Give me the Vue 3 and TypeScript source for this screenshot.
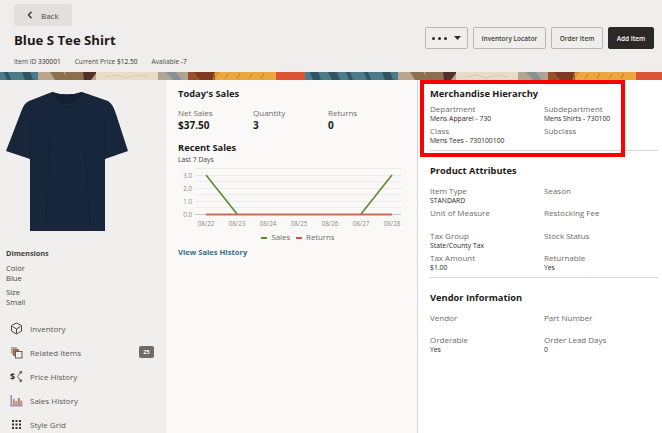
<script setup lang="ts">
const meta = [
  { k: 'Item ID', v: '330001' },
  { k: 'Current Price', v: '$12.50' },
  { k: 'Available', v: '-7' },
]
const nav = [
  { id: 'inv', label: 'Inventory' },
  { id: 'rel', label: 'Related Items', badge: '25' },
  { id: 'price', label: 'Price History' },
  { id: 'sales', label: 'Sales History' },
  { id: 'grid', label: 'Style Grid' },
]
const stats = [
  { k: 'Net Sales', v: '$37.50' },
  { k: 'Quantity', v: '3' },
  { k: 'Returns', v: '0' },
]
const merch = [
  { k: 'Department', v: 'Mens Apparel - 730' },
  { k: 'Subdepartment', v: 'Mens Shirts - 730100' },
  { k: 'Class', v: 'Mens Tees - 730100100' },
  { k: 'Subclass', v: '' },
]
const attrs = [
  { k: 'Item Type', v: 'STANDARD' },
  { k: 'Season', v: '' },
  { k: 'Unit of Measure', v: '' },
  { k: 'Restocking Fee', v: '' },
  { k: 'Tax Group', v: 'State/County Tax' },
  { k: 'Stock Status', v: '' },
  { k: 'Tax Amount', v: '$1.00' },
  { k: 'Returnable', v: 'Yes' },
]
const vendor = [
  { k: 'Vendor', v: '' },
  { k: 'Part Number', v: '' },
  { k: 'Orderable', v: 'Yes' },
  { k: 'Order Lead Days', v: '0' },
]
const yTicks = [
  { l: '3.0', y: 10 },
  { l: '2.0', y: 23 },
  { l: '1.0', y: 36 },
  { l: '0.0', y: 49 },
]
const minor = [3.5, 16.5, 29.5, 42.5]
const days = ['08/22', '08/23', '08/24', '08/25', '08/26', '08/27', '08/28'].map((l, i) => ({ l, x: 36 + i * 31 }))
</script>

<template>
  <div class="app">
    <header class="head">
      <div class="head-left">
        <button class="back">
          <svg width="6" height="8" viewBox="0 0 6 8"><path d="M4.5 .8 1.5 4l3 3.2" fill="none" stroke="#3a3633" stroke-width="1.4" /></svg>
          <span>Back</span>
        </button>
        <h1>Blue S Tee Shirt</h1>
        <div class="meta">
          <span v-for="m in meta" :key="m.k">{{ m.k }} <b>{{ m.v }}</b></span>
        </div>
      </div>
      <div class="actions">
        <button class="btn more">
          <span class="dots"><i></i><i></i><i></i></span>
          <svg width="7" height="4" viewBox="0 0 7 4"><path d="M0 0h7L3.5 4z" fill="#2c2826" /></svg>
        </button>
        <button class="btn w73">Inventory Locator</button>
        <button class="btn w52">Order Item</button>
        <button class="btn primary">Add Item</button>
      </div>
    </header>

    <svg class="stripe" width="662" height="8" aria-hidden="true">
      <defs>
        <pattern id="band" width="360" height="8" patternUnits="userSpaceOnUse">
          <rect width="360" height="8" fill="#d8c6a8" />
          <rect x="0" width="38" height="8" fill="#4b7a88" />
          <path d="M4 0h4l3 8H7zM22 0h8l3 8h-8z" fill="#2f5561" />
          <rect x="38" width="58" height="8" fill="#b8a78c" />
          <path d="M50 0h13l7 8H55zM65 0h18l3 8H68z" fill="#8c6f4e" />
          <path d="M83 0h14l-6 8H84z" fill="#53302a" />
          <rect x="96" width="62" height="8" fill="#e6dcc8" />
          <path d="M105 5l12-2 8 3 14-3 8 2" fill="none" stroke="#d6cab2" />
          <rect x="158" width="30" height="8" fill="#b0a594" />
          <path d="M166 0h10l6 8h-9z" fill="#8a9094" />
          <rect x="188" width="27" height="8" fill="#7e3a20" />
          <path d="M188 0h6l6 8h-12z" fill="#96502a" />
          <rect x="215" width="61" height="8" fill="#eca63e" />
          <path d="M215 0h4l-6 8zM228 2l-3 5M240 1l-3 6M252 2l-3 5M264 1l-3 6" fill="none" stroke="#b97f35" />
          <rect x="276" width="29" height="8" fill="#dc5434" />
          <rect x="305" width="55" height="8" fill="#4b7a88" />
          <path d="M310 0h8l3 8h-8zM328 0h9l3 8h-8zM346 0h4l3 8h-4z" fill="#2f5561" />
        </pattern>
      </defs>
      <rect width="662" height="8" fill="url(#band)" />
    </svg>

    <main class="body">
      <aside class="left">
        <svg class="shirt" width="166" height="153" viewBox="0 80 166 153" aria-label="Blue tee shirt">
          <path d="M52 92Q67 97 82 92L108 101Q113 104 116 114L128 151 105 159V231H30V159L6 151 21 112Q24 103 29 101Z" fill="#18263b" />
          <path d="M52 92Q67 97 82 92L80 99Q67 116 54 99Z" fill="#131f32" />
          <path d="M54 99Q67 112 80 99" fill="none" stroke="#22314a" />
          <path d="M30 120V159M105 120V159M50 140 46 220M85 150 90 225" fill="none" stroke="#152236" stroke-width="1.2" />
        </svg>
        <h3 class="dim-title">Dimensions</h3>
        <dl class="dims">
          <div><dt>Color</dt><dd>Blue</dd></div>
          <div><dt>Size</dt><dd>Small</dd></div>
        </dl>
        <nav class="nav">
          <a v-for="n in nav" :key="n.id" class="nav-row">
            <svg class="ico" width="13" height="13" viewBox="0 0 13 13">
              <g v-if="n.id === 'inv'" fill="none" stroke="#47423e" stroke-width="1">
                <path d="M6.5 1 11.5 3.5v5.5L6.5 12 1.5 9V3.5Z" stroke-linejoin="round" />
                <path d="M2.5 4.5 6.5 7 10.5 4.5M6.5 7v4.5" />
              </g>
              <g v-else-if="n.id === 'rel'">
                <rect x="1" y="1" width="6" height="7" fill="#b3a79c" />
                <rect x="3" y="3" width="6" height="7" fill="#9c6f5a" />
                <rect x="5.5" y="5.5" width="6.5" height="6.5" fill="#f1efee" stroke="#6d5a4e" />
              </g>
              <g v-else-if="n.id === 'price'">
                <text x="0" y="9.5" class="dollar">$</text>
                <path d="M7.5 6.5 10.5 2.5M7.5 6.5l3 4" stroke="#6f6a65" fill="none" />
                <rect x="9.5" y="1" width="2.6" height="2.6" fill="#6f6a65" />
                <rect x="9.5" y="9.5" width="2.6" height="2.6" fill="#6f6a65" />
              </g>
              <g v-else-if="n.id === 'sales'">
                <rect x="0.5" y="1" width="1.4" height="11" fill="#8a86b0" />
                <rect x="2.8" y="5" width="2" height="7" fill="#c08a72" />
                <rect x="5.3" y="7" width="2" height="5" fill="#c08a72" />
                <rect x="7.8" y="4" width="2" height="8" fill="#a77f88" />
                <rect x="10.3" y="6.5" width="2" height="5.5" fill="#c08a72" />
                <rect x="0.5" y="11.4" width="12" height="1" fill="#7f86b0" />
              </g>
              <g v-else fill="#35312e">
                <template v-for="c in [2, 5.5, 9]" :key="c">
                  <rect :x="c" y="2" width="2" height="2" />
                  <rect :x="c" y="5.5" width="2" height="2" />
                  <rect :x="c" y="9" width="2" height="2" />
                </template>
              </g>
            </svg>
            <span class="nav-label">{{ n.label }}</span>
            <span v-if="n.badge" class="badge">{{ n.badge }}</span>
          </a>
        </nav>
      </aside>

      <section class="mid">
        <h2>Today's Sales</h2>
        <div class="stats">
          <div v-for="s in stats" :key="s.k" class="stat">
            <span class="lbl">{{ s.k }}</span>
            <strong>{{ s.v }}</strong>
          </div>
        </div>
        <h2 class="recent">Recent Sales</h2>
        <div class="sub">Last 7 Days</div>
        <svg class="chart" width="236" height="66" viewBox="0 0 236 66">
          <line v-for="m in minor" :key="m" x1="25" x2="231" :y1="m" :y2="m" stroke="#ecebe9" />
          <line v-for="t in yTicks.slice(0, 3)" :key="t.l" x1="25" x2="231" :y1="t.y + 0.5" :y2="t.y + 0.5" stroke="#ecebe9" />
          <line x1="25" x2="231" y1="49.5" y2="49.5" stroke="#c9c7c4" />
          <text v-for="t in yTicks" :key="t.l" x="22" :y="t.y + 2.5" text-anchor="end" class="tick">{{ t.l }}</text>
          <text v-for="d in days" :key="d.l" :x="d.x" y="61" text-anchor="middle" class="tick">{{ d.l }}</text>
          <path d="M36 49.5H222" stroke="#c5594a" stroke-width="1.8" stroke-opacity=".85" fill="none" />
          <path d="M36 10 67 49M191 49 222 10" stroke="#5a8a32" stroke-width="1.6" fill="none" />
        </svg>
        <div class="legend">
          <span><i class="sw green"></i>Sales</span>
          <span><i class="sw red"></i>Returns</span>
        </div>
        <a class="link">View Sales History</a>
      </section>

      <section class="right">
        <div class="block first">
          <h2>Merchandise Hierarchy</h2>
          <div class="fields">
            <div v-for="f in merch" :key="f.k" class="field"><span class="lbl">{{ f.k }}</span><span class="val">{{ f.v }}</span></div>
          </div>
        </div>
        <div class="block">
          <h2>Product Attributes</h2>
          <div class="fields">
            <div v-for="f in attrs" :key="f.k" class="field"><span class="lbl">{{ f.k }}</span><span class="val">{{ f.v }}</span></div>
          </div>
        </div>
        <div class="block last">
          <h2>Vendor Information</h2>
          <div class="fields">
            <div v-for="f in vendor" :key="f.k" class="field"><span class="lbl">{{ f.k }}</span><span class="val">{{ f.v }}</span></div>
          </div>
        </div>
        <div class="highlight"></div>
      </section>
    </main>
  </div>
</template>

<style scoped>
.app {
  width: 662px;
  height: 433px;
  overflow: hidden;
  display: flex;
  flex-direction: column;
  font-family: "Open Sans", "Noto Sans", sans-serif;
  color: #1d1a18;
  background: #fff;
}
h1, h2, h3, dl, dd { margin: 0; }
button { font-family: inherit; cursor: pointer; }

.head {
  height: 72px;
  flex: none;
  background: #efeeec;
  display: flex;
  justify-content: space-between;
}
.head-left { padding: 4px 0 0 14px; }
.back {
  width: 58px;
  height: 22px;
  padding: 0 0 0 13px;
  display: flex;
  align-items: center;
  gap: 8px;
  border: 0;
  border-radius: 2px;
  background: #e1e0dc;
  color: #4a4643;
  font-size: 8px;
}
h1 {
  font-size: 13.2px;
  line-height: 20px;
  margin-top: 4px;
  font-weight: 700;
}
.meta {
  display: flex;
  gap: 14px;
  margin-top: 6px;
  font-size: 6.6px;
  line-height: 11px;
  color: #4a4643;
}
.meta b { font-weight: 400; color: #2c2826; }

.actions {
  display: flex;
  align-items: flex-start;
  gap: 5px;
  padding: 27px 8px 0 0;
}
.btn {
  height: 22px;
  padding: 0;
  border: 1px solid #b9b6b2;
  border-radius: 2px;
  background: transparent;
  color: #3f3b38;
  font-size: 6.5px;
  font-weight: 600;
}
.more {
  width: 43px;
  display: flex;
  align-items: center;
  justify-content: center;
  gap: 7px;
}
.dots { display: flex; gap: 3px; }
.dots i { width: 3px; height: 3px; border-radius: 50%; background: #2c2826; }
.w73 { width: 73px; }
.w52 { width: 52px; }
.primary { width: 46px; background: #2c2826; border-color: #2c2826; color: #fff; }

.stripe { display: block; flex: none; }

.body { flex: 1; display: flex; min-height: 0; }

.left {
  width: 166px;
  flex: none;
  background: #f1efee;
  font-size: 8px;
}
.shirt { display: block; }
.dim-title {
  margin: 15px 0 0 6px;
  font-size: 7.3px;
  line-height: 11px;
  font-weight: 700;
  color: #47423e;
}
.dims { margin: 4px 0 0 6px; }
.dims div { margin-bottom: 4px; }
.dims dt, .dims dd { line-height: 10px; color: #4a4643; font-size: 7.6px; }
.nav { margin-top: 9px; }
.nav-row {
  height: 24px;
  display: flex;
  align-items: center;
  padding: 0 12px 0 10px;
  color: #5a5551;
  font-size: 8px;
}
.ico { flex: none; width: 13px; height: 13px; margin-right: 7px; }
.dollar { font-size: 9px; font-weight: 700; fill: #35312e; }
.nav-label { flex: 1; }
.badge {
  width: 15px;
  height: 12px;
  border-radius: 2px;
  background: #6f6a65;
  color: #fff;
  font-size: 5.5px;
  font-weight: 700;
  line-height: 12px;
  text-align: center;
}

.mid {
  width: 252px;
  flex: none;
  box-sizing: border-box;
  padding: 7px 0 0 12px;
  background: #faf9f8;
  border-right: 1px solid #d9d7d4;
}
h2 {
  font-size: 9.3px;
  line-height: 14px;
  font-weight: 700;
  color: #1d1a18;
}
.lbl {
  display: block;
  font-size: 8px;
  line-height: 11px;
  color: #6f6a65;
}
.stats { display: flex; margin-top: 6px; }
.stat { width: 75px; }
.stat strong { display: block; font-size: 10px; line-height: 15px; font-weight: 700; }
.recent { margin-top: 8px; }
.sub { font-size: 6.8px; line-height: 9px; color: #4a4643; }
.chart { display: block; margin: 1px 0 0 -8px; }
.tick { font-size: 6.3px; fill: #8f8a85; }
.legend {
  display: flex;
  justify-content: center;
  gap: 6px;
  width: 240px;
  margin-top: 1px;
  font-size: 7.8px;
  line-height: 11px;
  color: #6f6a65;
}
.sw { display: inline-block; width: 6px; height: 1.5px; margin-right: 4px; vertical-align: middle; }
.green { background: #5a8a32; }
.red { background: #c5594a; }
.link {
  display: block;
  margin-top: 3px;
  font-size: 7.6px;
  line-height: 12px;
  font-weight: 700;
  color: #316d8c;
}

.right {
  flex: 1;
  position: relative;
  padding: 0 4px 0 12px;
  background: #fff;
}
.block { padding: 7px 0 2.5px; border-bottom: 1px solid #d9d7d4; }
.block.last { border-bottom: 0; }
.block + .block { padding-top: 13px; }
.fields {
  display: grid;
  grid-template-columns: 114px 1fr;
  grid-auto-rows: 22.5px;
  margin-top: 1.5px;
}
.block + .block .fields { margin-top: 6.5px; }
.field { overflow: hidden; }
.val { display: block; font-size: 6.8px; line-height: 9px; color: #2c2826; }
.highlight {
  position: absolute;
  left: 2px;
  top: 0;
  width: 205px;
  height: 77px;
  box-sizing: border-box;
  border: 4px solid #ff0000;
  pointer-events: none;
}
</style>
